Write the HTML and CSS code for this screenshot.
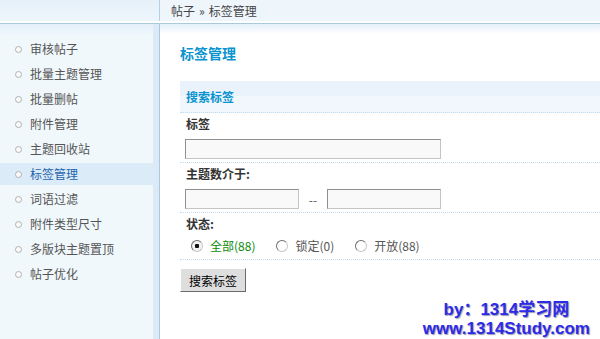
FILE: index.html
```html
<!DOCTYPE html>
<html lang="zh-CN">
<head>
    <meta charset="UTF-8">
    <title>标签管理</title>
    <link rel="stylesheet" href="styles.css">
</head>
<body>
    <div class="page">
        <!-- top bar -->
        <div class="top">
            <div class="logo"></div>
            <div class="crumb">帖子<span class="sep">&raquo;</span>标签管理</div>
        </div>

        <div class="body">
            <!-- left menu -->
            <ul class="menu">
                <li>审核帖子</li>
                <li>批量主题管理</li>
                <li>批量删帖</li>
                <li>附件管理</li>
                <li>主题回收站</li>
                <li class="active">标签管理</li>
                <li>词语过滤</li>
                <li>附件类型尺寸</li>
                <li>多版块主题置顶</li>
                <li>帖子优化</li>
            </ul>

            <!-- main area -->
            <div class="main">
                <h3 class="title">标签管理</h3>
                <form class="search">
                    <div class="band">搜索标签</div>
                    <div class="field">
                        <div class="label">标签</div>
                        <input type="text" class="txt long">
                    </div>
                    <div class="field">
                        <div class="label">主题数介于:</div>
                        <div class="range">
                            <input type="text" class="txt short">
                            <span class="dash">--</span>
                            <input type="text" class="txt short">
                        </div>
                    </div>
                    <div class="field">
                        <div class="label">状态:</div>
                        <div class="radios">
                            <label class="opt on"><input type="radio" name="status" checked>全部(88)</label>
                            <label class="opt"><input type="radio" name="status">锁定(0)</label>
                            <label class="opt"><input type="radio" name="status">开放(88)</label>
                        </div>
                    </div>
                    <button type="button" class="btn">搜索标签</button>
                </form>
            </div>
        </div>

        <div class="mark">
            <div>by：1314学习网</div>
            <div>www.1314Study.com</div>
        </div>
    </div>
</body>
</html>
```

FILE: styles.css
```css
html, body {
    margin: 0;
    padding: 0;
}

body {
    font-family: "Noto Sans CJK SC", "Liberation Sans", sans-serif;
    font-size: 12px;
    color: #333;
    background-color: #fff;
}

.page {
    position: relative;
    display: flex;
    flex-direction: column;
    height: 100vh;
    overflow: hidden;
}

/* top bar */
.top {
    display: flex;
    height: 21px;
    border-bottom: 2px solid #fff;
    background-color: #eef6fc;
}

.logo {
    width: 159px;
    background: linear-gradient(#e6f0f9, #eef6fc);
}

.crumb {
    flex: 1;
    border-left: 1px solid #b4d0e2;
    padding-left: 11px;
    line-height: 21px;
    color: #444;
}

.sep {
    margin: 0 4px;
}

.body {
    flex: 1;
    display: flex;
    border-top: 1px solid #a9cadc;
}

/* left menu */
.menu {
    width: 153px;
    margin: 0;
    padding: 14px 0 0;
    list-style: none;
    background: linear-gradient(#e4eff9, #f0f8fc 12px);
    border-right: 6px solid #dbeaf6;
}

.menu li {
    position: relative;
    height: 22px;
    line-height: 22px;
    margin-bottom: 3px;
    padding-left: 30px;
    color: #555;
}

.menu li::before {
    content: "";
    position: absolute;
    left: 15px;
    top: 8px;
    width: 5px;
    height: 5px;
    border: 1px solid #b0b0b0;
    border-radius: 50%;
    background-color: #fafafa;
}

.menu li.active {
    background-color: #dcebf8;
    color: #1f64ae;
}

/* main area */
.main {
    flex: 1;
    border-left: 1px solid #a9cadc;
    padding: 19px 0 0 20px;
    background: linear-gradient(#e4f0f9, #fff 10px);
}

.title {
    margin: 0 0 18px;
    font-size: 14px;
    line-height: 20px;
    color: #0993cf;
}

.band {
    height: 31px;
    line-height: 31px;
    padding-left: 6px;
    font-weight: bold;
    color: #0993cf;
    background: linear-gradient(#eaf3fc 15px, #f1f7fc 15px);
    border-bottom: 1px dotted #c4dcec;
}

.field {
    padding: 0 5px 3px;
    border-bottom: 1px dotted #c4dcec;
}

.label {
    line-height: 22px;
    padding-left: 1px;
    font-weight: bold;
    color: #333;
}

.txt {
    display: block;
    box-sizing: border-box;
    height: 20px;
    margin: 4px 0 0;
    padding: 0 3px;
    border: 1px solid #8f8f8f;
    border-right-color: #c4c4c4;
    border-bottom-color: #c4c4c4;
    background-color: #f9f9f9;
    font-size: 12px;
}

.long {
    width: 256px;
}

.range {
    display: flex;
    align-items: center;
    margin-top: 4px;
}

.range .txt {
    margin: 0;
}

.short {
    width: 114px;
}

.dash {
    width: 28px;
    text-align: center;
    color: #555;
}

.radios {
    display: flex;
    height: 21px;
    align-items: center;
    padding-left: 6px;
}

.opt {
    display: flex;
    align-items: center;
    margin-right: 21px;
    color: #555;
}

.opt.on {
    color: #0a8a0a;
}

.opt input {
    -webkit-appearance: none;
    appearance: none;
    box-sizing: border-box;
    width: 12px;
    height: 12px;
    margin: 0 7px 0 0;
    border: 1px solid #6e6e6e;
    border-right-color: #c8c8c8;
    border-bottom-color: #c8c8c8;
    border-radius: 50%;
    background-color: #fff;
}

.opt input:checked {
    background: radial-gradient(circle, #111 0 2px, #f2f2f2 2.5px);
}

.btn {
    display: block;
    width: 66px;
    height: 24px;
    margin-top: 8px;
    padding: 0;
    font-family: inherit;
    font-size: 12px;
    color: #000;
    background-color: #dedede;
    border: 1px solid #fff;
    border-right-color: #6a6a6a;
    border-bottom-color: #6a6a6a;
}

/* watermark */
.mark {
    position: absolute;
    right: 10px;
    bottom: 1px;
    text-align: center;
    font-family: "Liberation Sans", "Noto Sans CJK SC", sans-serif;
    font-size: 17px;
    font-weight: bold;
    line-height: 19px;
    color: #2c2ce8;
    text-shadow: 1px 1px 1px #9a9ab0;
}
```
